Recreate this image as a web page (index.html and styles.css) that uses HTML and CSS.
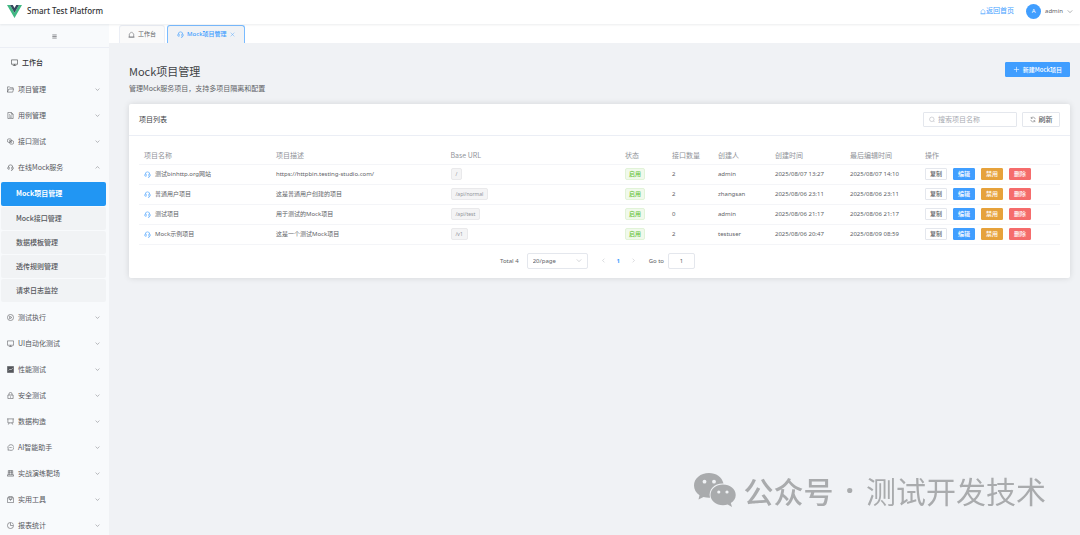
FILE: index.html
```html
<!DOCTYPE html>
<html lang="zh-CN">
<head>
  <meta charset="UTF-8"/>
  <meta name="viewport" content="width=device-width, initial-scale=1.0"/>
  <title>Smart Test Platform</title>
  <link rel="stylesheet" href="styles.css">
</head>
<body>

<!-- icon set -->
<svg class="icon-defs" aria-hidden="true">
  <symbol id="i-down" viewBox="0 0 16 16"><path d="M2 5l6 6 6-6"/></symbol>
  <symbol id="i-up" viewBox="0 0 16 16"><path d="M2 11l6-6 6 6"/></symbol>
  <symbol id="i-left" viewBox="0 0 16 16"><path d="M11 2L5 8l6 6"/></symbol>
  <symbol id="i-right" viewBox="0 0 16 16"><path d="M5 2l6 6-6 6"/></symbol>
  <symbol id="i-close" viewBox="0 0 16 16"><path d="M2 2l12 12M14 2L2 14"/></symbol>
  <symbol id="i-plus" viewBox="0 0 16 16"><path d="M8 2v12M2 8h12"/></symbol>
  <symbol id="i-home" viewBox="0 0 16 16"><path d="M3 14V7l5-5 5 5v7zM1 14h14"/></symbol>
  <symbol id="i-headset" viewBox="0 0 16 16"><path d="M5 7v5H3.500Q1.500 12 1.500 9.500T3.500 7zM11 7v5h1.500q2 0 2-2.500T12.500 7zM3 7a5 5 0 0 1 10 0M13 12q-.5 3-4 3"/></symbol>
  <symbol id="i-monitor" viewBox="0 0 16 16"><path d="M1 2h14v10H1zM8 12v3M4 15h8"/></symbol>
  <symbol id="i-folder" viewBox="0 0 16 16"><path d="M1 14V2h5l2 2h6v3M1 14l3-7h11l-2 7z"/></symbol>
  <symbol id="i-doc" viewBox="0 0 16 16"><path d="M2 1h8l4 4v10H2zM10 1v4h4M5 6h2M5 9h6M5 12h6"/></symbol>
  <symbol id="i-link" viewBox="0 0 16 16"><rect x="1" y="2" width="9" height="8" rx="3"/><rect x="6" y="6" width="9" height="8" rx="3"/><path d="M5 5l6 6"/></symbol>
  <symbol id="i-play" viewBox="0 0 16 16"><circle cx="8" cy="8" r="7"/><path d="M6 5l5 3-5 3z"/></symbol>
  <symbol id="i-chart" viewBox="0 0 16 16"><path d="M1 1h14v14H1z" fill="currentColor"/><path d="M4 10l3-3 2 2 4-4" stroke="#fff"/></symbol>
  <symbol id="i-lock" viewBox="0 0 16 16"><path d="M2 7h12v8H2zM4.500 7V4.500a3.500 3.500 0 0 1 7 0V7M8 10v3"/></symbol>
  <symbol id="i-board" viewBox="0 0 16 16"><path d="M0 2h16M2 2v9h12V2M5 11l-2 4M11 11l2 4"/></symbol>
  <symbol id="i-chat" viewBox="0 0 16 16"><path d="M2 14l1-2.500A7 6.500 0 1 1 6 14zM4 8h2M7 8h2M10 8h2"/></symbol>
  <symbol id="i-office" viewBox="0 0 16 16"><path d="M3 11V1h10v10M6 1v10M10 1v10M3 5h10M1 14v-3h14v3z"/></symbol>
  <symbol id="i-box" viewBox="0 0 16 16"><path d="M1 4h14v11H1zM4 4V1h8v3M5 4v4h6V4M8 8v3"/></symbol>
  <symbol id="i-pie" viewBox="0 0 16 16"><path d="M8 1v7h7A7 7 0 1 1 8 1zM10 1.300A7 7 0 0 1 14.700 6"/></symbol>
  <symbol id="i-search" viewBox="0 0 16 16"><circle cx="7.500" cy="7.500" r="6"/><path d="M12 12l3 3"/></symbol>
  <symbol id="i-refresh" viewBox="0 0 16 16"><path d="M2 9a6 6 0 0 0 11 2.500M14 7A6 6 0 0 0 3 4.500M3 1v4h4M13 15v-4H9"/></symbol>
</svg>

<header class="topbar">
  <svg class="logo" viewBox="0 0 28 24"><path d="M0 0h5.600L14 14.500 22.400 0H28L14 24z" fill="#41b883"/><path d="M5.600 0h5.200L14 5.600 17.200 0h5.200L14 14.500z" fill="#34495e"/></svg>
  <span class="brand">Smart Test Platform</span>
  <a class="home-link" href="#"><svg class="icon"><use href="#i-home"/></svg>返回首页</a>
  <button class="user"><span class="avatar">A</span>admin<svg class="icon"><use href="#i-down"/></svg></button>
</header>

<div class="layout">
  <nav class="sidebar">
    <button class="collapse" aria-label="menu"><svg class="icon" viewBox="0 0 16 16"><path d="M1 3h14M1 8h14M1 13h14"/></svg></button>
    <a class="dashboard" href="#"><svg class="icon"><use href="#i-monitor"/></svg>工作台</a>
    <button class="menu-item"><svg class="icon"><use href="#i-folder"/></svg>项目管理<svg class="arrow"><use href="#i-down"/></svg></button>
    <button class="menu-item"><svg class="icon"><use href="#i-doc"/></svg>用例管理<svg class="arrow"><use href="#i-down"/></svg></button>
    <button class="menu-item"><svg class="icon"><use href="#i-link"/></svg>接口测试<svg class="arrow"><use href="#i-down"/></svg></button>
    <button class="menu-item"><svg class="icon"><use href="#i-headset"/></svg>在线Mock服务<svg class="arrow"><use href="#i-up"/></svg></button>
    <div class="submenu">
      <a class="active" href="#">Mock项目管理</a>
      <a href="#">Mock接口管理</a>
      <a href="#">数据模板管理</a>
      <a href="#">透传规则管理</a>
      <a href="#">请求日志监控</a>
    </div>
    <button class="menu-item"><svg class="icon"><use href="#i-play"/></svg>测试执行<svg class="arrow"><use href="#i-down"/></svg></button>
    <button class="menu-item"><svg class="icon"><use href="#i-monitor"/></svg>UI自动化测试<svg class="arrow"><use href="#i-down"/></svg></button>
    <button class="menu-item"><svg class="icon"><use href="#i-chart"/></svg>性能测试<svg class="arrow"><use href="#i-down"/></svg></button>
    <button class="menu-item"><svg class="icon"><use href="#i-lock"/></svg>安全测试<svg class="arrow"><use href="#i-down"/></svg></button>
    <button class="menu-item"><svg class="icon"><use href="#i-board"/></svg>数据构造<svg class="arrow"><use href="#i-down"/></svg></button>
    <button class="menu-item"><svg class="icon"><use href="#i-chat"/></svg>AI智能助手<svg class="arrow"><use href="#i-down"/></svg></button>
    <button class="menu-item"><svg class="icon"><use href="#i-office"/></svg>实战演练靶场<svg class="arrow"><use href="#i-down"/></svg></button>
    <button class="menu-item"><svg class="icon"><use href="#i-box"/></svg>实用工具<svg class="arrow"><use href="#i-down"/></svg></button>
    <button class="menu-item"><svg class="icon"><use href="#i-pie"/></svg>报表统计<svg class="arrow"><use href="#i-down"/></svg></button>
  </nav>

  <main class="main">
    <div class="tabs">
      <a class="tab" href="#"><svg class="icon"><use href="#i-home"/></svg>工作台</a>
      <a class="tab active" href="#"><svg class="icon"><use href="#i-headset"/></svg>Mock项目管理<svg class="close"><use href="#i-close"/></svg></a>
    </div>

    <div class="content">
      <div class="page-header">
        <div>
          <h1>Mock项目管理</h1>
          <p>管理Mock服务项目，支持多项目隔离和配置</p>
        </div>
        <button class="btn btn-primary btn-new"><svg class="icon"><use href="#i-plus"/></svg>新建Mock项目</button>
      </div>

      <section class="card">
        <div class="card-header">
          <h2>项目列表</h2>
          <label class="search"><svg class="icon"><use href="#i-search"/></svg><input type="text" placeholder="搜索项目名称" aria-label="搜索项目名称"/></label>
          <button class="btn btn-refresh"><svg class="icon"><use href="#i-refresh"/></svg>刷新</button>
        </div>

        <div class="card-body">
          <table>
            <colgroup>
              <col class="col-name"/><col/><col/><col class="col-status"/><col class="col-count"/><col class="col-user"/><col class="col-time"/><col class="col-time"/><col class="col-ops"/>
            </colgroup>
            <thead>
              <tr><th>项目名称</th><th>项目描述</th><th>Base URL</th><th>状态</th><th>接口数量</th><th>创建人</th><th>创建时间</th><th>最后编辑时间</th><th>操作</th></tr>
            </thead>
            <tbody>
              <tr>
                <td><div class="name"><svg class="icon"><use href="#i-headset"/></svg>测试binhttp.org网站</div></td>
                <td>https://httpbin.testing-studio.com/</td>
                <td><span class="tag">/</span></td>
                <td><span class="tag tag-success">启用</span></td>
                <td>2</td><td>admin</td><td>2025/08/07 13:27</td><td>2025/08/07 14:10</td>
                <td><div class="ops"><button class="btn">复制</button><button class="btn btn-primary">编辑</button><button class="btn btn-warning">禁用</button><button class="btn btn-danger">删除</button></div></td>
              </tr>
              <tr>
                <td><div class="name"><svg class="icon"><use href="#i-headset"/></svg>普通用户项目</div></td>
                <td>这是普通用户创建的项目</td>
                <td><span class="tag">/api/normal</span></td>
                <td><span class="tag tag-success">启用</span></td>
                <td>2</td><td>zhangsan</td><td>2025/08/06 23:11</td><td>2025/08/06 23:11</td>
                <td><div class="ops"><button class="btn">复制</button><button class="btn btn-primary">编辑</button><button class="btn btn-warning">禁用</button><button class="btn btn-danger">删除</button></div></td>
              </tr>
              <tr>
                <td><div class="name"><svg class="icon"><use href="#i-headset"/></svg>测试项目</div></td>
                <td>用于测试的Mock项目</td>
                <td><span class="tag">/api/test</span></td>
                <td><span class="tag tag-success">启用</span></td>
                <td>0</td><td>admin</td><td>2025/08/06 21:17</td><td>2025/08/06 21:17</td>
                <td><div class="ops"><button class="btn">复制</button><button class="btn btn-primary">编辑</button><button class="btn btn-warning">禁用</button><button class="btn btn-danger">删除</button></div></td>
              </tr>
              <tr>
                <td><div class="name"><svg class="icon"><use href="#i-headset"/></svg>Mock示例项目</div></td>
                <td>这是一个测试Mock项目</td>
                <td><span class="tag">/v1</span></td>
                <td><span class="tag tag-success">启用</span></td>
                <td>2</td><td>testuser</td><td>2025/08/06 20:47</td><td>2025/08/09 08:59</td>
                <td><div class="ops"><button class="btn">复制</button><button class="btn btn-primary">编辑</button><button class="btn btn-warning">禁用</button><button class="btn btn-danger">删除</button></div></td>
              </tr>
            </tbody>
          </table>

          <div class="pagination">
            <span>Total 4</span>
            <div class="page-size">
              <select aria-label="page size"><option>20/page</option></select>
              <svg class="icon"><use href="#i-down"/></svg>
            </div>
            <div class="pager">
              <button aria-label="prev"><svg class="icon"><use href="#i-left"/></svg></button>
              <button class="current">1</button>
              <button aria-label="next"><svg class="icon"><use href="#i-right"/></svg></button>
            </div>
            <label class="jump">Go to<input type="text" value="1"/></label>
          </div>
        </div>
      </section>
    </div>
  </main>
</div>

<div class="watermark">
  <svg viewBox="0 0 42 34"><path d="M15 0C6.500 0 0 5.500 0 12.500c0 4 2 7.300 5.500 9.700L4.500 26.500l5-2.500c2 .6 4 .9 6.500.8C14 16 21 10 29.500 10.500 28 4 22 0 15 0z"/><path d="M29 11.500c-7 0-12.500 4.600-12.500 10.500S22 32.300 29 32.300c1.700 0 3.200-.3 4.700-.7L38 34l-1.200-3.900C40 28.200 41.700 25.300 41.700 22c0-5.900-5.700-10.500-12.700-10.500z"/><g fill="#f0f2f5"><circle cx="10.500" cy="8.700" r="1.900"/><circle cx="20" cy="8.700" r="1.900"/><circle cx="24.800" cy="19" r="1.600"/><circle cx="33" cy="19" r="1.600"/></g></svg>
  <span class="label">公众号</span>
  <span class="dot">·</span>
  <span>测试开发技术</span>
</div>

</body>
</html>
```

FILE: styles.css
```css
* {
  box-sizing: border-box;
}

body {
  font-family: "Noto Sans", "Noto Sans CJK SC", sans-serif;
  font-size: 6px;
  line-height: 10px;
  color: #606266;
  background: #f0f2f5;
  margin: 0;
  height: 100vh;
  display: flex;
  flex-direction: column;
  overflow: hidden;
}

a {
  color: inherit;
  text-decoration: none;
}

button, input, select {
  font: inherit;
  color: inherit;
  background: none;
  border: none;
  margin: 0;
  padding: 0;
  outline: none;
}

button {
  cursor: pointer;
}

.icon-defs {
  display: none;
}

.icon, .arrow, .close {
  width: 7px;
  height: 7px;
  flex: none;
  fill: none;
  stroke: currentColor;
  stroke-width: 1.3;
}

.arrow, .close {
  width: 5px;
  height: 5px;
}

/* top bar */
.topbar {
  height: 24px;
  flex: none;
  display: flex;
  align-items: center;
  padding: 0 7px 2px;
  background: #fff;
  box-shadow: 0 1px 2px rgba(0, 21, 41, 0.08);
  z-index: 1;
}

.logo {
  width: 15px;
  height: 13px;
}

.brand {
  flex: 1;
  margin-left: 5px;
  font-size: 8px;
  font-weight: 500;
  color: #303133;
}

.home-link {
  display: flex;
  align-items: center;
  font-size: 7px;
  color: #409eff;
}

.home-link .icon {
  width: 6px;
}

.user {
  display: flex;
  align-items: center;
  gap: 4px;
  margin-left: 12px;
}

.user .icon {
  width: 6px;
}

.avatar {
  width: 15px;
  height: 15px;
  line-height: 15px;
  border-radius: 50%;
  background: #409eff;
  color: #fff;
}

.layout {
  flex: 1;
  min-height: 0;
  display: flex;
}

/* sidebar */
.sidebar {
  width: 109px;
  flex: none;
  display: flex;
  flex-direction: column;
  background: #f8fafc;
  font-family: "Noto Sans CJK SC", sans-serif;
  font-size: 7px;
  color: #55575c;
  overflow: hidden;
}

.collapse {
  height: 24px;
  flex: none;
  border-bottom: 1px solid #ebeef5;
}

.collapse .icon {
  width: 5px;
  height: 5px;
  stroke-width: 2;
}

.dashboard {
  height: 28px;
  flex: none;
  display: flex;
  align-items: center;
  gap: 4px;
  padding-left: 11px;
  font-weight: 500;
  color: #303133;
}

.menu-item {
  height: 26px;
  flex: none;
  display: flex;
  align-items: center;
  gap: 4px;
  padding: 0 9px 0 7px;
}

.arrow {
  margin-left: auto;
}

.submenu {
  display: flex;
  flex-direction: column;
  gap: 1px;
  padding: 2px 3px 2px 1px;
}

.submenu a {
  height: 23px;
  line-height: 23px;
  padding-left: 15px;
  border-radius: 2px;
  background: #f1f3f5;
  font-weight: 500;
}

.submenu a.active {
  height: 24px;
  background: #2196f3;
  color: #fff;
  font-weight: 700;
}

/* tabs */
.main {
  flex: 1;
  min-width: 0;
}

.tabs {
  height: 19px;
  display: flex;
  gap: 2px;
  padding: 1px 10px 0;
  background: #fff;
}

.tab {
  display: flex;
  align-items: center;
  gap: 3px;
  padding: 0 8px 1px;
  border: 1px solid #ebeef5;
  border-bottom: none;
  border-radius: 3px 3px 0 0;
  background: #fafafa;
}

.tab.active {
  padding: 0 9px 1px;
  border-color: #79bbff;
  background: #f0f2f5;
  color: #409eff;
  font-weight: 500;
}

/* page */
.content {
  padding: 19px 10px 0 20px;
}

.page-header {
  display: flex;
  justify-content: space-between;
  align-items: flex-start;
  font-family: "Noto Sans CJK SC", sans-serif;
}

h1 {
  margin: 1px 0 4px;
  font-size: 11px;
  line-height: 16px;
  font-weight: 400;
  color: #404246;
}

.page-header p {
  margin: 0 0 11px;
  font-size: 7px;
}

.btn {
  height: 12px;
  display: inline-flex;
  align-items: center;
  justify-content: center;
  border: 1px solid #e4e7ed;
  border-radius: 1px;
  background: #fff;
  font-weight: 500;
}

.btn-primary {
  background: #409eff;
  border-color: #409eff;
  color: #fff;
}

.btn-warning {
  background: #e6a23c;
  border-color: #e6a23c;
  color: #fff;
}

.btn-danger {
  background: #f56c6c;
  border-color: #f56c6c;
  color: #fff;
}

.btn-new {
  height: 15px;
  gap: 3px;
  padding: 0 7px;
}

.card {
  background: #fff;
  border-radius: 2px;
  box-shadow: 0 0 6px rgba(0, 0, 0, 0.12);
}

.card-header {
  height: 32px;
  display: flex;
  align-items: center;
  gap: 5px;
  padding: 0 10px;
  border-bottom: 1px solid #ebeef5;
}

h2 {
  flex: 1;
  margin: 0;
  font-size: 7px;
  font-weight: 400;
  color: #404246;
}

.search {
  width: 94px;
  height: 15px;
  display: flex;
  align-items: center;
  gap: 3px;
  padding: 0 5px;
  border: 1px solid #e4e7ed;
  border-radius: 1px;
  font-size: 7px;
  color: #a8abb2;
}

.search input {
  flex: 1;
  min-width: 0;
}

.search input::placeholder {
  color: #a8abb2;
}

.btn-refresh {
  width: 38px;
  height: 15px;
  gap: 3px;
  font-size: 7px;
}

.btn-refresh .icon, .search .icon {
  width: 6px;
}

.card-body {
  padding: 10px 10px 9px;
}

/* table */
table {
  width: 100%;
  table-layout: fixed;
  border-collapse: collapse;
}

th, td {
  height: 20px;
  padding: 0 5px;
  border-bottom: 1px solid #f4f5f8;
  text-align: left;
  white-space: nowrap;
}

th {
  height: 18px;
  font-family: "Noto Sans CJK SC", sans-serif;
  font-size: 7px;
  font-weight: 400;
  color: #909399;
}

.col-name { width: 132px; }
.col-status { width: 47px; }
.col-count { width: 46px; }
.col-user { width: 57px; }
.col-time { width: 75px; }
.col-ops { width: 140px; }

.name {
  display: flex;
  align-items: center;
  gap: 4px;
}

.name .icon {
  color: #409eff;
}

.tag {
  display: inline-block;
  height: 12px;
  padding: 0 4px;
  border: 1px solid #e9e9eb;
  border-radius: 2px;
  background: #f4f4f5;
  font-size: 5px;
  color: #909399;
  vertical-align: middle;
}

.tag-success {
  padding: 0 3px;
  border-color: #e1f3d8;
  background: #f0f9eb;
  font-size: 6px;
  color: #67c23a;
  font-weight: 500;
}

.ops {
  display: flex;
  gap: 6px;
}

.ops .btn {
  width: 22px;
}

/* pagination */
.pagination {
  display: flex;
  align-items: center;
  justify-content: center;
  gap: 8px;
  padding-top: 8px;
  margin-right: 4px;
}

.page-size {
  width: 61px;
  height: 16px;
  display: flex;
  align-items: center;
  padding: 0 5px;
  border: 1px solid #e4e7ed;
  border-radius: 2px;
}

.page-size select {
  flex: 1;
  appearance: none;
}

.page-size .icon {
  width: 6px;
  color: #a8abb2;
}

.pager {
  display: flex;
}

.pager button {
  width: 15px;
  height: 15px;
  color: #a8abb2;
}

.pager .icon {
  width: 5px;
  height: 5px;
}

.pager .current {
  color: #409eff;
  font-weight: 700;
}

.jump {
  display: flex;
  align-items: center;
  gap: 4px;
}

.jump input {
  width: 27px;
  height: 16px;
  border: 1px solid #e4e7ed;
  border-radius: 2px;
  text-align: center;
}

/* watermark */
.watermark {
  position: fixed;
  right: 34px;
  bottom: 25px;
  display: flex;
  align-items: center;
  gap: 8px;
  font-family: "Noto Sans CJK SC", sans-serif;
  font-size: 30px;
  font-weight: 400;
  line-height: 40px;
  color: #a9abad;
}

.watermark svg {
  width: 42px;
  height: 34px;
  fill: #a9abad;
}

.watermark .label {
  font-weight: 500;
}

.watermark .dot {
  font-family: "Noto Sans", sans-serif;
  font-weight: 700;
  padding: 0 4px;
}
```
